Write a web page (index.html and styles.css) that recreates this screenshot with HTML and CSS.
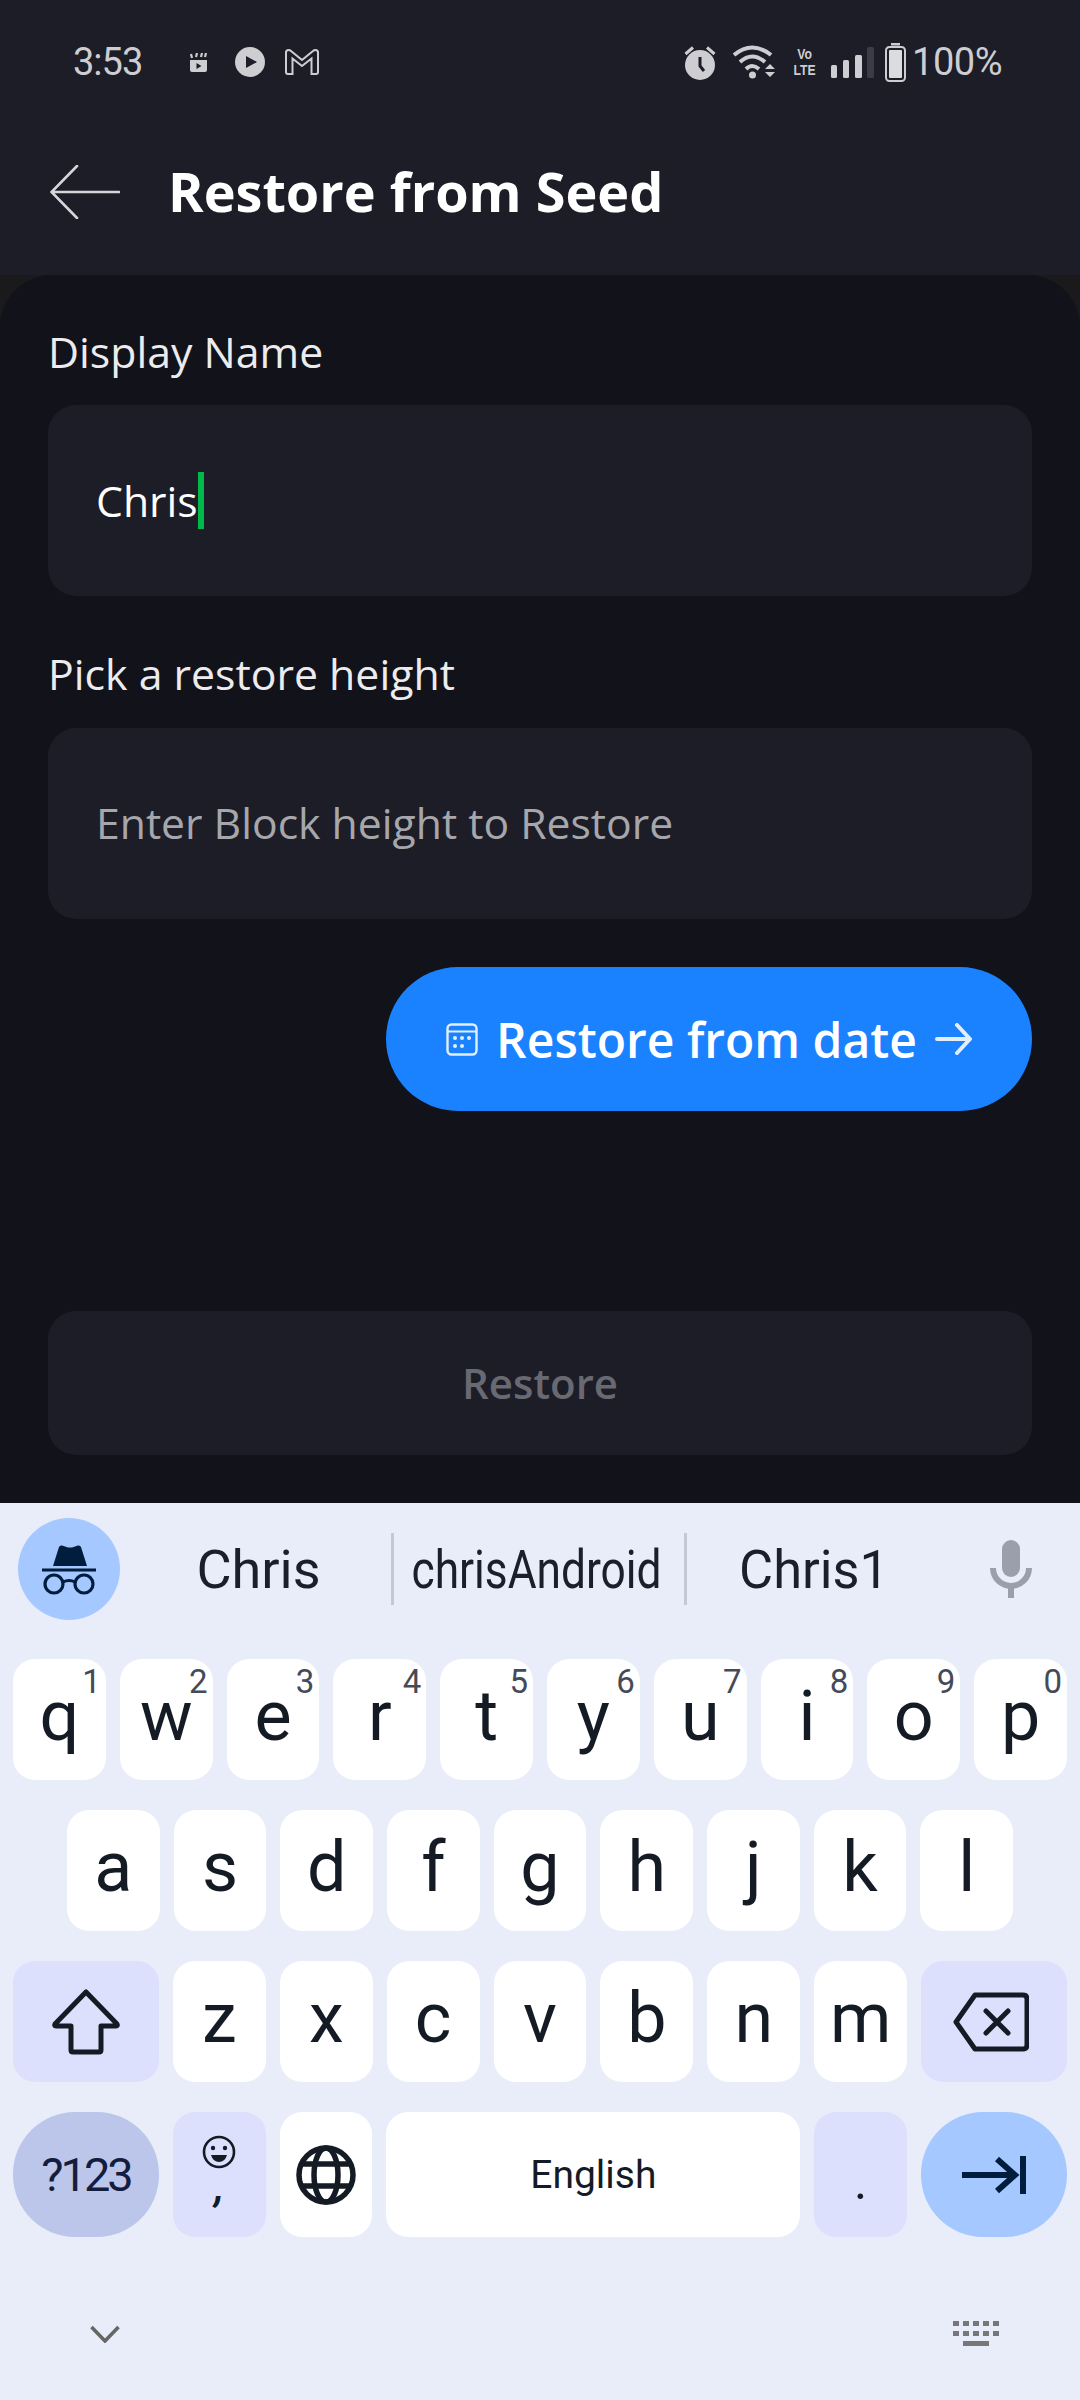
FILE: index.html
```html
<!doctype html>
<html lang="en">
  <head>
    <meta charset="utf-8" />
    <title>Restore from Seed</title>
    <link rel="stylesheet" href="styles.css">
  </head>
  <body>
    <div class="phone">
      <header class="top">
        <div class="status">
          <span class="time">3:53</span>
          <svg class="ic-clap" width="17" height="19" viewBox="0 0 17 19"><path d="M0 7h17v10a2 2 0 0 1-2 2H2a2 2 0 0 1-2-2z" fill="#cdcdd2"/><path d="M6.5 10v6l5-3z" fill="#1c1d26"/><path d="M1 1l1 4M7 0l-1 4M12 0l-1 4M16 0l-1 4" stroke="#cdcdd2" stroke-width="2.2"/></svg>
          <svg class="ic-play" width="30" height="30" viewBox="0 0 30 30"><circle cx="15" cy="15" r="15" fill="#cdcdd2"/><path d="M11 9l11 6-11 6z" fill="#1c1d26"/></svg>
          <svg class="ic-gmail" width="34" height="26" viewBox="0 0 34 26"><path d="M1 3.500Q1 1 3.500 1Q5 1 6 2l11 9L28 2q1-1 2.500-1Q33 1 33 3.500V23q0 2-2 2h-4.500V9.500L17 17 7.500 9.500V25H3q-2 0-2-2z" fill="none" stroke="#cdcdd2" stroke-width="2"/></svg>
          <span class="status-gap"></span>
          <svg class="ic-alarm" width="32" height="35" viewBox="0 0 32 35"><circle cx="16" cy="20" r="15" fill="#cdcdd2"/><path d="M16 12v9l4 5" fill="none" stroke="#1c1d26" stroke-width="3"/><path d="M1.500 9L9 2.500M30.500 9L23 2.500" stroke="#cdcdd2" stroke-width="3"/></svg>
          <svg class="ic-wifi" width="44" height="35" viewBox="0 0 44 35"><g fill="none" stroke="#cdcdd2" stroke-width="4"><path d="M2 10Q20-5 39 10"/><path d="M8 17Q20 6 33 17"/><path d="M14 24Q20 18 27 24"/></g><circle cx="20.500" cy="30" r="3.500" fill="#cdcdd2"/><path d="M33 24l5-5 5 5zM33 27l5 5 5-5z" fill="#cdcdd2"/></svg>
          <span class="volte"><b>Vo</b><b>LTE</b></span>
          <svg class="ic-signal" width="43" height="31" viewBox="0 0 43 31"><rect x="0" y="18" width="6" height="13" rx="1.500" fill="#cdcdd2"/><rect x="12" y="13" width="6" height="18" rx="1.500" fill="#cdcdd2"/><rect x="24" y="8" width="7" height="23" rx="1.500" fill="#cdcdd2"/><rect x="36" y="0" width="7" height="31" rx="1.500" fill="#3b3c45"/></svg>
          <svg class="ic-battery" width="21" height="39" viewBox="0 0 21 39"><rect x="6" y="0" width="9" height="2.500" fill="#cdcdd2"/><rect x="1" y="4" width="19" height="34" rx="3.500" fill="none" stroke="#cdcdd2" stroke-width="2"/><rect x="4" y="7" width="13" height="28" rx="1" fill="#dcdce0"/></svg>
          <span class="pct">100%</span>
        </div>
        <div class="appbar">
          <svg class="back" width="70" height="54" viewBox="0 0 70 54"><path d="M69 27H2M27 1L1.500 27 27 53" fill="none" stroke="#d6d6da" stroke-width="2.600" stroke-linecap="round"/></svg>
          <h1>Restore from Seed</h1>
        </div>
      </header>

      <main class="sheet-wrap">
        <div class="sheet">
          <label class="lbl">Display Name</label>
          <div class="field"><span class="val">Chris</span><i class="caret"></i></div>
          <label class="lbl lbl-2">Pick a restore height</label>
          <div class="field"><span class="hint">Enter Block height to Restore</span></div>
          <div class="btn-row">
            <button class="date-btn">
              <svg width="32" height="33" viewBox="0 0 32 33"><rect x="1.500" y="1.500" width="29" height="30" rx="4" fill="none" stroke="#e3eefc" stroke-width="2.400"/><path d="M2 8.500h28" stroke="#e3eefc" stroke-width="2"/><g fill="#e3eefc"><circle cx="9" cy="15" r="2"/><circle cx="16" cy="15" r="2"/><circle cx="23" cy="15" r="2"/><circle cx="9" cy="23" r="2"/><circle cx="16" cy="23" r="2"/></g></svg>
              <span>Restore from date</span>
              <svg width="37" height="32" viewBox="0 0 37 32"><path d="M2 16h32M22 2l13 14-13 14" fill="none" stroke="#e3eefc" stroke-width="4" stroke-linecap="round" stroke-linejoin="round"/></svg>
            </button>
          </div>
          <button class="restore">Restore</button>
        </div>
      </main>

      <section class="kb">
        <div class="suggest">
          <span class="incog"><svg width="56" height="52" viewBox="0 0 56 52"><path d="M11 23l6-19q1-2 3-1.500l6 2h4l6-2q2-.5 3 1.500l6 19z" fill="#001d3d" transform="translate(1 0)"/><path d="M1 27h54" stroke="#001d3d" stroke-width="3.200"/><circle cx="13" cy="41" r="9" fill="none" stroke="#001d3d" stroke-width="3.200"/><circle cx="43" cy="41" r="9" fill="none" stroke="#001d3d" stroke-width="3.200"/><path d="M22 39q6-3 12 0" fill="none" stroke="#001d3d" stroke-width="3"/></svg></span>
          <span class="word w1">Chris</span>
          <i class="sep"></i>
          <span class="word w2"><span>chrisAndroid</span></span>
          <i class="sep"></i>
          <span class="word w3">Chris1</span>
          <svg class="mic" width="42" height="58" viewBox="0 0 42 58"><rect x="12" y="0" width="18" height="37" rx="9" fill="#9aa0ab"/><path d="M3 28a18 18 0 0 0 36 0" fill="none" stroke="#9aa0ab" stroke-width="6"/><rect x="18" y="46" width="6" height="12" fill="#9aa0ab"/></svg>
        </div>

        <div class="row">
          <div class="key letter">q<sup>1</sup></div>
          <div class="key letter">w<sup>2</sup></div>
          <div class="key letter">e<sup>3</sup></div>
          <div class="key letter">r<sup>4</sup></div>
          <div class="key letter">t<sup>5</sup></div>
          <div class="key letter">y<sup>6</sup></div>
          <div class="key letter">u<sup>7</sup></div>
          <div class="key letter">i<sup>8</sup></div>
          <div class="key letter">o<sup>9</sup></div>
          <div class="key letter">p<sup>0</sup></div>
        </div>
        <div class="row row-2">
          <div class="key letter">a</div>
          <div class="key letter">s</div>
          <div class="key letter">d</div>
          <div class="key letter">f</div>
          <div class="key letter">g</div>
          <div class="key letter">h</div>
          <div class="key letter">j</div>
          <div class="key letter">k</div>
          <div class="key letter">l</div>
        </div>
        <div class="row">
          <div class="key wide mod"><svg width="68" height="66" viewBox="0 0 68 66"><path d="M34 3L3 35q-1 2 1 2h15v24q0 2 2 2h26q2 0 2-2V37h15q2 0 1-2z" fill="none" stroke="#151b24" stroke-width="5" stroke-linejoin="round"/></svg></div>
          <div class="key letter">z</div>
          <div class="key letter">x</div>
          <div class="key letter">c</div>
          <div class="key letter">v</div>
          <div class="key letter">b</div>
          <div class="key letter">n</div>
          <div class="key letter">m</div>
          <div class="key wide mod del"><svg width="76" height="60" viewBox="0 0 76 60"><path d="M22 3h48q4 0 4 4v46q0 4-4 4H22L3 30z" fill="none" stroke="#151b24" stroke-width="5" stroke-linejoin="round"/><path d="M33 19l22 22M55 19L33 41" stroke="#151b24" stroke-width="5" stroke-linecap="round"/></svg></div>
        </div>
        <div class="row row-4">
          <div class="key wide sym">?123</div>
          <div class="key mod emoji">
            <svg width="34" height="34" viewBox="0 0 34 34"><circle cx="17" cy="17" r="15" fill="none" stroke="#151b24" stroke-width="2.600"/><circle cx="11" cy="13" r="2.200" fill="#151b24"/><circle cx="23" cy="13" r="2.200" fill="#151b24"/><path d="M9 20h16q-2 7-8 7t-8-7z" fill="#151b24"/></svg>
            <span class="comma">,</span>
          </div>
          <div class="key"><svg width="60" height="60" viewBox="0 0 60 60"><g fill="none" stroke="#151b24" stroke-width="5.500"><circle cx="30" cy="30" r="27"/><ellipse cx="30" cy="30" rx="12" ry="27"/><path d="M4 19h52M4 41h52"/></g></svg></div>
          <div class="key space">English</div>
          <div class="key mod dot">.</div>
          <div class="key wide enter"><svg width="64" height="38" viewBox="0 0 64 38"><path d="M0 19h54M35 3l18 16-18 16" fill="none" stroke="#001d3d" stroke-width="6"/><rect x="58" y="0" width="6" height="38" fill="#001d3d"/></svg></div>
        </div>

        <div class="kb-foot">
          <svg width="30" height="18" viewBox="0 0 30 18"><path d="M1.500 2L15 16 28.500 2" fill="none" stroke="#666" stroke-width="3.600"/></svg>
          <svg width="46" height="26" viewBox="0 0 46 26"><g fill="#777"><rect x="0" y="0" width="6" height="5"/><rect x="10" y="0" width="6" height="5"/><rect x="20" y="0" width="6" height="5"/><rect x="30" y="0" width="6" height="5"/><rect x="40" y="0" width="6" height="5"/><rect x="0" y="10" width="6" height="5"/><rect x="10" y="10" width="6" height="5"/><rect x="20" y="10" width="6" height="5"/><rect x="30" y="10" width="6" height="5"/><rect x="40" y="10" width="6" height="5"/><rect x="10" y="20" width="26" height="5"/></g></svg>
        </div>
      </section>
    </div>
  </body>
</html>
```

FILE: styles.css
```css
* { box-sizing: border-box; }

body {
  background: #e9edfa;
  margin: 0;
  padding: 0;
}

.phone {
  display: flex;
  flex-direction: column;
  height: 2400px;
  overflow: hidden;
  width: 1080px;
}

/* top bars */
.top {
  background: #1c1d26;
  height: 275px;
}

.status {
  align-items: center;
  color: #cdcdd2;
  display: flex;
  font-family: Roboto, sans-serif;
  height: 124px;
  padding: 0 78px 0 73px;
}
.time { font-size: 38px; letter-spacing: -1px; width: 68px; white-space: nowrap; }
.ic-clap { margin-left: 49px; }
.ic-play { margin-left: 28px; }
.ic-gmail { margin-left: 20px; }
.status-gap { flex: 1; }
.ic-wifi { margin-left: 16px; }
.ic-signal { margin-left: 15px; }
.ic-battery { margin-left: 11px; }
.volte {
  align-items: center;
  display: flex;
  flex-direction: column;
  font-family: "Liberation Sans", sans-serif;
  font-size: 14px;
  line-height: 16.500px;
  margin-left: 17px;
  transform: scaleX(.87);
  width: 23px;
}
.volte b { font-weight: 700; }
.pct { font-size: 38px; margin-left: 6px; letter-spacing: -.5px; }

.appbar {
  align-items: center;
  display: flex;
  height: 136px;
  padding-left: 50px;
}
.appbar h1 {
  color: #fff;
  font-family: "Open Sans", sans-serif;
  font-size: 54px;
  font-weight: 700;
  margin: -2px 0 0 48px;
}

/* form */
.sheet-wrap {
  background: #1a1a1c;
  height: 1228px;
}
.sheet {
  background: #11121a;
  border-radius: 52px 52px 0 0;
  font-family: "Open Sans", sans-serif;
  height: 100%;
  padding: 50px 48px 0;
}
.lbl {
  color: #ececee;
  display: block;
  font-size: 42.800px;
  height: 52px;
  line-height: 54px;
  margin-bottom: 28px;
}
.lbl-2 { margin-top: 51px; margin-bottom: 29px; }

.field {
  align-items: center;
  background: #1c1d26;
  border-radius: 28px;
  display: flex;
  font-size: 42.700px;
  height: 191px;
  padding-left: 48px;
}
.val { color: #fff; }
.hint { color: #a6a7ac; margin-top: -2px; }
.caret {
  background: #00b94a;
  height: 57px;
  width: 6px;
}

.btn-row {
  display: flex;
  justify-content: flex-end;
  margin-top: 48px;
}
.date-btn {
  align-items: center;
  background: #1a82ff;
  border: 0;
  border-radius: 72px;
  color: #fff;
  display: flex;
  font-family: "Open Sans", sans-serif;
  font-size: 48px;
  font-weight: 600;
  gap: 18px;
  height: 144px;
  justify-content: center;
  padding: 0;
  width: 646px;
}

.restore {
  background: #1c1d26;
  border: 0;
  border-radius: 28px;
  color: #686973;
  display: block;
  font-family: "Open Sans", sans-serif;
  font-size: 42px;
  font-weight: 600;
  height: 144px;
  margin-top: 200px;
  padding-bottom: 3px;
  width: 100%;
}

/* keyboard */
.kb {
  background: #e9edfa;
  flex: 1;
  font-family: Roboto, sans-serif;
}

.suggest {
  align-items: center;
  color: #1a1f29;
  display: flex;
  font-size: 54px;
  height: 156px;
  padding: 0 0 24px 18px;
}
.incog {
  align-items: center;
  background: #a4c8ff;
  border-radius: 50%;
  display: flex;
  height: 102px;
  justify-content: center;
  width: 102px;
}
.word { display: flex; justify-content: center; }
.w1 { padding-left: 6px; width: 271px; }
.w2 { padding-right: 5px; width: 290px; }
.w2 span { transform: scaleX(.82); }
.w3 { transform: scaleX(.97); width: 254px; }
.sep {
  background: #c4c8d4;
  height: 72px;
  width: 3px;
}
.mic { margin-left: 49px; }

.row {
  display: flex;
  gap: 14px;
  height: 121px;
  margin-bottom: 30px;
  padding: 0 13px;
}
.row-2 { padding: 0 67px; }
.row-4 { height: 125px; margin-bottom: 0; }

.key {
  align-items: center;
  background: #fff;
  border-radius: 22px;
  color: #151b24;
  display: flex;
  flex: 1 1 0;
  font-size: 68px;
  justify-content: center;
  position: relative;
}
.letter { font-size: 70px; padding-bottom: 8px; }
.key sup {
  color: #454a58;
  font-size: 33px;
  line-height: 1;
  position: absolute;
  right: 5px;
  top: 6px;
}
.wide { flex: 0 0 146px; }
.mod { background: #dce0fd; }
.del svg { margin-left: -6px; }
.sym {
  background: #bbc6ea;
  border-radius: 62px;
  color: #141d3d;
  font-size: 47px;
  letter-spacing: -3px;
}
.emoji { flex-direction: column; }
.comma { font-size: 40px; font-style: italic; font-weight: 700; line-height: 38px; height: 46px; }
.space { flex: 0 0 414px; font-size: 39px; }
.dot { font-size: 50px; padding-top: 14px; }
.enter { background: #a4c8ff; border-radius: 62px; }

.kb-foot {
  align-items: center;
  display: flex;
  justify-content: space-between;
  padding: 84px 81px 0 90px;
}
```
